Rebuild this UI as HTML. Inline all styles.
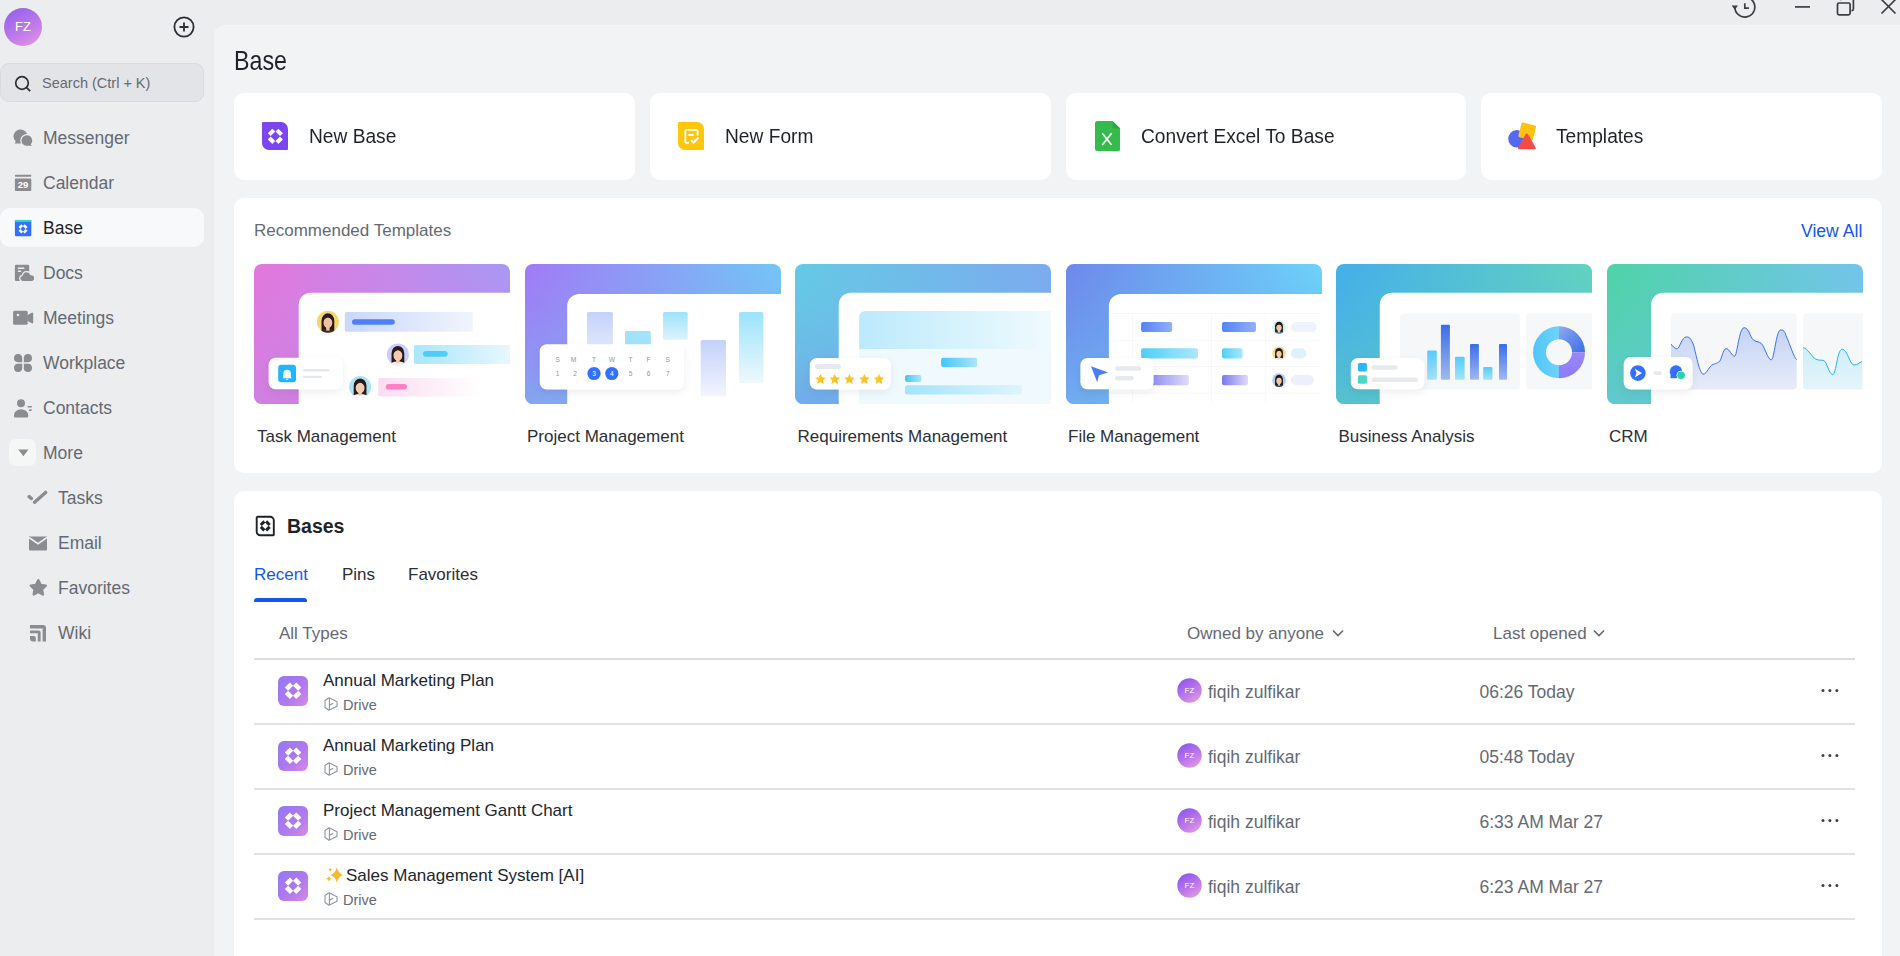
<!DOCTYPE html>
<html><head><meta charset="utf-8">
<style>
*{box-sizing:border-box;margin:0;padding:0}
html,body{width:1900px;height:956px;overflow:hidden;background:#ECEDEF;font-family:"Liberation Sans",sans-serif;color:#1F2329}
.abs{position:absolute}
#side{position:absolute;left:0;top:0;width:214px;height:956px;background:#ECEDEF}
.av{position:absolute;left:4px;top:8px;width:38px;height:38px;border-radius:50%;background:linear-gradient(150deg,#8E5CF0 0%,#C17BE8 60%,#E59BE0 100%);color:#fff;font-size:13px;line-height:38px;text-align:center}
.search{position:absolute;left:0;top:63px;width:204px;height:39px;border-radius:9px;background:#E3E4E7;border:1px solid #DADBDE}
.search span{position:absolute;left:41px;top:10.5px;font-size:14.5px;color:#646A73}
.nav{position:absolute;left:0;width:204px;height:39px}
.nav .t{position:absolute;left:43px;top:10px;font-size:17.5px;color:#646A73;white-space:nowrap}
.nav.act{background:#F8F9FA;border-radius:10px}
.nav.act .t{color:#1F2329}
.nav svg{position:absolute}
#main{position:absolute;left:214px;top:25px;width:1686px;height:931px;background:#F2F3F5;border-top-left-radius:10px}
.title{position:absolute;left:233.8px;top:44.6px;font-size:28px;color:#1F2329;transform:scaleX(.83);transform-origin:0 0}
.card{position:absolute;background:#fff;border-radius:10px}
.ac{top:93px;height:87px}
.ac .t{position:absolute;left:75px;top:31px;font-size:20.5px;color:#1F2329;white-space:nowrap;transform:scaleX(.935);transform-origin:0 0}
.ac svg{position:absolute;left:28px;top:29px}
.tl{font-size:17px;color:#2B2F36;white-space:nowrap;margin-top:.5px}
.tab{top:565px;font-size:17px;color:#2B2F36;white-space:nowrap}
.hd{top:624px;font-size:17px;color:#646A73;white-space:nowrap}
.rt{font-size:17px;color:#22262C;white-space:nowrap;margin-top:1px}
.rd{font-size:14.5px;color:#646A73;white-space:nowrap;margin-top:1px}
.rg{font-size:17.5px;color:#646A73;white-space:nowrap;margin-top:-.5px}
</style></head><body>
<div id="side">
  <div class="av">FZ</div>
  <svg class="abs" style="left:173px;top:16px" width="22" height="22" viewBox="0 0 22 22"><circle cx="11" cy="11" r="9.6" fill="none" stroke="#2B2F36" stroke-width="1.8"/><path d="M11 6.5v9M6.5 11h9" stroke="#2B2F36" stroke-width="1.8"/></svg>
  <div class="search">
    <svg class="abs" style="left:13px;top:11px" width="18" height="18" viewBox="0 0 18 18"><circle cx="8" cy="8" r="6.3" fill="none" stroke="#2B2F36" stroke-width="1.7"/><path d="M12.6 12.6l3.6 3.6" stroke="#2B2F36" stroke-width="1.7"/></svg>
    <span>Search (Ctrl + K)</span>
  </div>

  <div class="nav" style="top:118px"><svg style="left:13px;top:10px" width="21" height="19" viewBox="0 0 21 19"><path d="M7.5 1.4a7 7 0 0 1 0 14H1.6l1.2-1.9A7 7 0 0 1 7.5 1.4z" fill="#8A8C90"/><circle cx="13.8" cy="12.6" r="6.6" fill="#ECEDEF"/><path d="M13.8 7.2a5.4 5.4 0 0 1 3.9 9.1l1.2 1.5h-5.1a5.3 5.3 0 0 1 0-10.6z" fill="#8A8C90"/></svg><span class="t">Messenger</span></div>
  <div class="nav" style="top:163px"><svg style="left:14px;top:11px" width="18" height="18" viewBox="0 0 18 18"><rect x="0.9" y="0.7" width="16.4" height="2" rx=".6" fill="#8A8C90"/><rect x="0.9" y="4.5" width="16.4" height="12.5" rx="1" fill="#8A8C90"/><text x="9.1" y="14.3" font-family="Liberation Sans" font-weight="bold" font-size="9.5" fill="#fff" text-anchor="middle">29</text></svg><span class="t">Calendar</span></div>
  <div class="nav act" style="top:208px"><svg style="left:14px;top:11px" width="18" height="18" viewBox="0 0 18 18"><rect x="0.9" y="0.9" width="16.4" height="16.4" rx="1.2" fill="#3370FF"/><rect x="0.9" y="0.9" width="16.4" height="2" fill="#2ED9C3"/><g fill="#fff" transform="translate(9.1 9.9) scale(0.62)"><rect x="-3.15" y="-2.05" width="6.3" height="4.1" transform="translate(-3.6 -3.7) rotate(-45)"/><rect x="-3.15" y="-2.05" width="6.3" height="4.1" transform="translate(3.4 -3.7) rotate(45)"/><rect x="-3.15" y="-2.05" width="6.3" height="4.1" transform="translate(-3.6 3.8) rotate(45)"/><rect x="-3.15" y="-2.05" width="6.3" height="4.1" transform="translate(3.4 3.8) rotate(-45)"/></g></svg><span class="t">Base</span></div>
  <div class="nav" style="top:253px"><svg style="left:14px;top:11px" width="20" height="18" viewBox="0 0 20 18"><rect x="0.9" y="0.8" width="14.3" height="16.1" rx="1.2" fill="#8A8C90"/><rect x="3.8" y="3.4" width="6.6" height="1.6" rx=".5" fill="#ECEDEF"/><rect x="3.8" y="6.5" width="3.4" height="1.6" rx=".5" fill="#ECEDEF"/><path d="M8.6 17.6a3.2 3.2 0 0 1-.4-6.3a4.6 4.6 0 0 1 8.8-.6a3.4 3.4 0 0 1 .7 6.9z" fill="#8A8C90" stroke="#ECEDEF" stroke-width="1.3"/></svg><span class="t">Docs</span></div>
  <div class="nav" style="top:298px"><svg style="left:13px;top:12px" width="21" height="16" viewBox="0 0 21 16"><rect x="0.1" y="0.7" width="14.6" height="14" rx="1.5" fill="#8A8C90"/><path d="M15.2 5.8l4-2.3v9l-4-2.3z" fill="#8A8C90" stroke="#8A8C90" stroke-width="2" stroke-linejoin="round"/><circle cx="5" cy="5" r="1.3" fill="#ECEDEF"/></svg><span class="t">Meetings</span></div>
  <div class="nav" style="top:343px"><svg style="left:13px;top:10px" width="20" height="20" viewBox="0 0 20 20"><path d="M9.2 9.2H4.8A4.1 4.1 0 1 1 9.2 4.8z" fill="#8A8C90"/><path d="M10.8 9.2h4.4A4.1 4.1 0 1 0 10.8 4.8z" fill="#8A8C90"/><path d="M9.2 10.8H4.8A4.1 4.1 0 1 0 9.2 15.2z" fill="#8A8C90"/><path d="M10.8 10.8h4.4A4.1 4.1 0 1 1 10.8 15.2z" fill="#8A8C90"/></svg><span class="t">Workplace</span></div>
  <div class="nav" style="top:388px"><svg style="left:13px;top:10px" width="21" height="20" viewBox="0 0 21 20"><circle cx="8" cy="5.2" r="4" fill="#8A8C90"/><path d="M1 18.5v-1.5a6 4.8 0 0 1 14.2 0v1.5a.9.9 0 0 1-.9.9H1.9a.9.9 0 0 1-.9-.9z" fill="#8A8C90"/><rect x="14.5" y="8" width="4.5" height="1.6" rx=".8" fill="#8A8C90"/><rect x="15.8" y="11.3" width="3" height="1.6" rx=".8" fill="#8A8C90"/></svg><span class="t">Contacts</span></div>
  <div class="nav" style="top:433px"><div class="abs" style="left:9px;top:6px;width:27px;height:27px;border-radius:7px;background:#F5F6F6"></div><svg style="left:18px;top:16px" width="11" height="8" viewBox="0 0 11 8"><path d="M0.3 0.5h10.2L5.4 7.2z" fill="#8A8C90"/></svg><span class="t">More</span></div>
  <div class="nav" style="top:478px"><svg style="left:27px;top:12px" width="21" height="16" viewBox="0 0 21 16"><path d="M2.2 6.6l2.2 1.9" stroke="#8A8C90" stroke-width="3.4" stroke-linecap="round"/><path d="M7.6 12.2L18.6 2.4" stroke="#8A8C90" stroke-width="3.4" stroke-linecap="round"/></svg><span class="t" style="left:58px">Tasks</span></div>
  <div class="nav" style="top:523px"><svg style="left:28px;top:12px" width="20" height="16" viewBox="0 0 20 16"><path d="M1 1.4h18v13a1 1 0 0 1-1 1H2a1 1 0 0 1-1-1z" fill="#8A8C90"/><path d="M1 2.5l9 6.2 9-6.2" fill="none" stroke="#ECEDEF" stroke-width="1.6"/></svg><span class="t" style="left:58px">Email</span></div>
  <div class="nav" style="top:568px"><svg style="left:29px;top:10px" width="19" height="20" viewBox="0 0 19 20"><path d="M9.3 2.2l2.3 4.7 5.2.7-3.8 3.7.9 5.2-4.6-2.5-4.6 2.5.9-5.2-3.8-3.7 5.2-.7z" fill="#8A8C90" stroke="#8A8C90" stroke-width="2.4" stroke-linejoin="round"/></svg><span class="t" style="left:58px">Favorites</span></div>
  <div class="nav" style="top:613px"><svg style="left:29px;top:10px" width="18" height="20" viewBox="0 0 18 20"><path d="M1 2h13a3 3 0 0 1 3 3v13.6h-3.4V5.4H1z" fill="#8A8C90"/><path d="M1 7.4h8.6a2 2 0 0 1 2 2v9.2H8.8V10.2H1z" fill="#8A8C90"/><path d="M1 13h3.8a2 2 0 0 1 2 2v3.6H4a3 3 0 0 1-3-3z" fill="#8A8C90"/></svg><span class="t" style="left:58px">Wiki</span></div>
</div>
<div id="main"></div>
<div class="title">Base</div>

<svg class="abs" style="left:1728px;top:-4px" width="180" height="26" viewBox="0 0 180 26">
  <g fill="none" stroke="#3A3D42" stroke-width="1.7">
    <path d="M6.8 11A10 10 0 1 0 11.8 2.4"/>
    <path d="M16.8 7.3v4.8h4.1"/>
    <path d="M67 10.9h15"/>
    <rect x="109.5" y="7" width="12.6" height="11.8" rx="1.6"/>
    <path d="M112.8 4.2V3.6a1.6 1.6 0 0 1 1.6-1.6h9.4a1.6 1.6 0 0 1 1.6 1.6v9.4a1.6 1.6 0 0 1-1.6 1.6h-.4"/>
    <path d="M153.5 3.5l14 14M167.5 3.5l-14 14"/>
  </g>
  <path d="M3.6 9.6h6.4l-3.2 4.2z" fill="#3A3D42"/>
</svg>
<div class="card ac" style="left:234px;width:401px"><svg width="26" height="28" viewBox="0 0 26 28"><path d="M1 0H19A7 7 0 0 1 26 7V27A1 1 0 0 1 25 28H7A7 7 0 0 1 0 21V1A1 1 0 0 1 1 0z" fill="#7B46F0"/><g fill="#fff"><rect x="-3.2" y="-2.05" width="6.4" height="4.1" transform="translate(9.5 10.4) rotate(-45)"/><rect x="-3.2" y="-2.05" width="6.4" height="4.1" transform="translate(17.2 10.4) rotate(45)"/><rect x="-3.2" y="-2.05" width="6.4" height="4.1" transform="translate(9.5 18.2) rotate(45)"/><rect x="-3.2" y="-2.05" width="6.4" height="4.1" transform="translate(17.2 18.2) rotate(-45)"/></g></svg><span class="t">New Base</span></div>
<div class="card ac" style="left:650px;width:401px"><svg width="26" height="28" viewBox="0 0 26 28"><path d="M1 0H19A7 7 0 0 1 26 7V27A1 1 0 0 1 25 28H7A7 7 0 0 1 0 21V1A1 1 0 0 1 1 0z" fill="#FFC60A"/><g fill="none" stroke="#fff" stroke-width="1.9"><path d="M19.6 13.4V9.2a1.3 1.3 0 0 0-1.3-1.3H8.6a1.3 1.3 0 0 0-1.3 1.3v10.4a1.3 1.3 0 0 0 1.3 1.3h2.3"/><path d="M10.3 12.9h5.4"/><path d="M13.1 18.2l2.4 2.3 4.8-4.8" stroke-width="2"/></g></svg><span class="t">New Form</span></div>
<div class="card ac" style="left:1066px;width:400px"><svg style="left:28px;top:28px" width="26" height="30" viewBox="0 0 26 30"><path d="M3 0H18L26 7.6V27.5A2.5 2.5 0 0 1 23.5 30H3A2.5 2.5 0 0 1 .5 27.5V2.5A2.5 2.5 0 0 1 3 0z" fill="#35BB4B" transform="translate(0.5 0)"/><path d="M18.5 0L26.5 7.6H20.5a2 2 0 0 1-2-2z" fill="#2DA841"/><path d="M8.2 12.3l9.4 11.8M17.6 12.3l-9.4 11.8" stroke="#fff" stroke-width="1.6"/></svg><span class="t">Convert Excel To Base</span></div>
<div class="card ac" style="left:1481px;width:401px"><svg style="left:25px;top:27px" width="30" height="30" viewBox="0 0 30 30"><circle cx="10.9" cy="18.8" r="8.7" fill="#5468F4"/><path d="M16.6 2.3l11.5 3a1.6 1.6 0 0 1 1.1 2l-3 11.6a1.6 1.6 0 0 1-2 1.1l-11.5-3a1.6 1.6 0 0 1-1.1-2l3-11.6a1.6 1.6 0 0 1 2-1.1z" fill="#FFC20E" transform="translate(.8 .3)"/><path d="M19.5 13.5a1.2 1.2 0 0 1 2.1 0l7.7 13.4a1.2 1.2 0 0 1-1 1.8H12.8a1.2 1.2 0 0 1-1-1.8z" fill="#F54A45" transform="translate(.3 .6)"/></svg><span class="t">Templates</span></div>

<div class="card" style="left:234px;top:198px;width:1648px;height:275px"></div>
<div class="abs" style="left:254px;top:221px;font-size:17px;color:#646A73">Recommended Templates</div>
<div class="abs" style="left:1801px;top:220.5px;font-size:17.6px;color:#1456F0">View All</div>
<svg class="abs" style="left:254px;top:264px" width="256" height="140" viewBox="0 0 256 140">
<defs>
<linearGradient id="g1" x1="0" y1="0" x2="1" y2="0.35"><stop offset="0" stop-color="#E477DC"/><stop offset="1" stop-color="#A19CF8"/></linearGradient>
<linearGradient id="gb1" x1="0" y1="0" x2="0" y2="1"><stop offset="0" stop-color="#E477DC" stop-opacity="0"/><stop offset="1" stop-color="#D07EE0"/></linearGradient>
<clipPath id="cl1"><path d="M8 0H248A8 8 0 0 1 256 8V140H8A8 8 0 0 1 0 132V8A8 8 0 0 1 8 0z"/></clipPath>
<filter id="sh1" x="-30%" y="-40%" width="160%" height="200%"><feDropShadow dx="0" dy="3" stdDeviation="4" flood-color="#1F2329" flood-opacity="0.07"/></filter>
</defs>
<g clip-path="url(#cl1)">
<rect width="256" height="140" fill="url(#g1)"/>
<rect width="256" height="140" fill="url(#gb1)" opacity="0.8"/>
<rect x="44.7" y="28.8" width="260" height="140" rx="12" fill="#fff"/>

<defs>
<linearGradient id="r1a" x1="0" x2="1"><stop offset="0" stop-color="#C8D7FB"/><stop offset="1" stop-color="#F1F4FD"/></linearGradient>
<linearGradient id="r1b" x1="0" x2="1"><stop offset="0" stop-color="#A9E6FB"/><stop offset="1" stop-color="#EAF8FE"/></linearGradient>
<linearGradient id="r1c" x1="0" x2="1"><stop offset="0" stop-color="#FCDCF0"/><stop offset="1" stop-color="#FFFFFF"/></linearGradient>
</defs>
<rect x="90.8" y="48" width="128" height="19.8" rx="2" fill="url(#r1a)"/>
<rect x="98" y="55.3" width="42.8" height="5.5" rx="2.75" fill="#4F7FF5"/>
<rect x="159.9" y="81" width="100" height="19" rx="2" fill="url(#r1b)"/>
<rect x="169" y="87" width="24.6" height="5.7" rx="2.85" fill="#4DCDF7"/>
<rect x="124.2" y="113.9" width="104" height="18.6" rx="2" fill="url(#r1c)"/>
<rect x="131.8" y="120" width="21.2" height="5.6" rx="2.8" fill="#FF7FC4"/>
<g>
<circle cx="73.9" cy="57.8" r="11" fill="#F5D66E"/>
<clipPath id="c1a"><circle cx="73.9" cy="57.8" r="11"/></clipPath>
<g clip-path="url(#c1a)">
<path d="M67.52 66.05V56.70A6.38 7.48 0 0 1 80.28 56.70V66.05z" fill="#2B1A16"/>
<ellipse cx="73.9" cy="69.35" rx="8.58" ry="4.62" fill="#3A2A28"/>
<rect x="72.25" y="62.20" width="3.30" height="4.40" fill="#F0C3A0"/>
<ellipse cx="73.9" cy="58.68" rx="4.40" ry="5.50" fill="#F0C3A0"/>
<path d="M68.95 57.25Q69.50 50.98 73.90 51.20Q78.30 50.98 78.85 57.25Q76.10 53.40 73.90 53.62Q71.70 53.40 68.95 57.25z" fill="#2B1A16"/>
</g></g>
<g>
<circle cx="143.9" cy="90.5" r="11" fill="#C9CFFA"/>
<clipPath id="c1b"><circle cx="143.9" cy="90.5" r="11"/></clipPath>
<g clip-path="url(#c1b)">
<path d="M137.52 98.75V89.40A6.38 7.48 0 0 1 150.28 89.40V98.75z" fill="#2A1C18"/>
<ellipse cx="143.9" cy="102.05" rx="8.58" ry="4.62" fill="#F4F1EE"/>
<rect x="142.25" y="94.90" width="3.30" height="4.40" fill="#F3CDB3"/>
<ellipse cx="143.9" cy="91.38" rx="4.40" ry="5.50" fill="#F3CDB3"/>
<path d="M138.95 89.95Q139.50 83.68 143.90 83.90Q148.30 83.68 148.85 89.95Q146.10 86.10 143.90 86.32Q141.70 86.10 138.95 89.95z" fill="#2A1C18"/>
</g></g>
<g>
<circle cx="106.1" cy="123" r="11" fill="#AEE3F7"/>
<clipPath id="c1c"><circle cx="106.1" cy="123" r="11"/></clipPath>
<g clip-path="url(#c1c)">
<path d="M99.72 131.25V121.90A6.38 7.48 0 0 1 112.48 121.90V131.25z" fill="#2A1C18"/>
<ellipse cx="106.1" cy="134.55" rx="8.58" ry="4.62" fill="#FFFFFF"/>
<rect x="104.45" y="127.40" width="3.30" height="4.40" fill="#F2CBB0"/>
<ellipse cx="106.1" cy="123.88" rx="4.40" ry="5.50" fill="#F2CBB0"/>
<path d="M101.15 122.45Q101.70 116.18 106.10 116.40Q110.50 116.18 111.05 122.45Q108.30 118.60 106.10 118.82Q103.90 118.60 101.15 122.45z" fill="#2A1C18"/>
</g></g>
<g filter="url(#sh1)"><rect x="14.6" y="93.7" width="74" height="31.5" rx="7" fill="#fff"/></g>
<rect x="24.2" y="100.7" width="17.8" height="17.6" rx="3" fill="#1FB6FF"/>
<path d="M29.3 113.3v-3.8a3.8 3.8 0 0 1 7.6 0v3.8l.9.9h-9.4z" fill="#fff"/><rect x="32" y="114.8" width="2.2" height="1.1" rx=".5" fill="#fff"/>
<rect x="49" y="105.1" width="26.7" height="2.4" rx="1.2" fill="#E6E9EC"/>
<rect x="49" y="111.7" width="19.2" height="2.2" rx="1.1" fill="#E6E9EC"/>

</g></svg>
<svg class="abs" style="left:525px;top:264px" width="256" height="140" viewBox="0 0 256 140">
<defs>
<linearGradient id="g2" x1="0" y1="0" x2="1" y2="0.35"><stop offset="0" stop-color="#A17AF6"/><stop offset="1" stop-color="#6CD0F5"/></linearGradient>
<linearGradient id="gb2" x1="0" y1="0" x2="0" y2="1"><stop offset="0" stop-color="#A17AF6" stop-opacity="0"/><stop offset="1" stop-color="#7FAAEE"/></linearGradient>
<clipPath id="cl2"><path d="M8 0H248A8 8 0 0 1 256 8V140H8A8 8 0 0 1 0 132V8A8 8 0 0 1 8 0z"/></clipPath>
<filter id="sh2" x="-30%" y="-40%" width="160%" height="200%"><feDropShadow dx="0" dy="3" stdDeviation="4" flood-color="#1F2329" flood-opacity="0.07"/></filter>
</defs>
<g clip-path="url(#cl2)">
<rect width="256" height="140" fill="url(#g2)"/>
<rect width="256" height="140" fill="url(#gb2)" opacity="0.8"/><g transform="translate(-1 0)">
<rect x="43.2" y="30" width="260" height="140" rx="12" fill="#fff"/>

<defs>
<linearGradient id="p2a" x1="0" y1="0" x2="0" y2="1"><stop offset="0" stop-color="#C3D2FA"/><stop offset="1" stop-color="#E4EBFC"/></linearGradient>
<linearGradient id="p2b" x1="0" y1="0" x2="0" y2="1"><stop offset="0" stop-color="#9DE3FB"/><stop offset="1" stop-color="#DCF3FB"/></linearGradient>
<linearGradient id="p2c" x1="0" y1="0" x2="0" y2="1"><stop offset="0" stop-color="#C3D1FA"/><stop offset="1" stop-color="#F2F5FE"/></linearGradient>
<linearGradient id="p2d" x1="0" y1="0" x2="0" y2="1"><stop offset="0" stop-color="#9BE3FB"/><stop offset="1" stop-color="#EEF9FD"/></linearGradient>
</defs>
<rect x="63" y="48" width="25.9" height="40" rx="1.5" fill="url(#p2a)"/>
<rect x="101" y="67" width="25.8" height="20" rx="1.5" fill="#A1E3FB"/>
<rect x="139" y="48" width="24.7" height="27.8" rx="1.5" fill="url(#p2b)"/>
<rect x="176.7" y="76.1" width="25.3" height="56.4" rx="1.5" fill="url(#p2c)"/>
<rect x="214.9" y="48" width="24.5" height="70.9" rx="1.5" fill="url(#p2d)"/>
<g filter="url(#sh2)"><rect x="15.8" y="80.2" width="144.1" height="45.4" rx="7" fill="#fff"/></g>
<g font-family="Liberation Sans" font-size="6.6" fill="#8F959E" text-anchor="middle">
<text x="33.7" y="97.5">S</text><text x="49.5" y="97.5">M</text><text x="70" y="97.5">T</text><text x="87.8" y="97.5">W</text><text x="106.6" y="97.5">T</text><text x="124.5" y="97.5">F</text><text x="143.8" y="97.5">S</text>
<circle cx="70" cy="109.5" r="6.6" fill="#3370FF"/><circle cx="87.8" cy="109.5" r="6.6" fill="#3370FF"/>
<text x="33.7" y="111.6">1</text><text x="51" y="111.6">2</text><text x="70" y="111.6" fill="#fff">3</text><text x="87.8" y="111.6" fill="#fff">4</text><text x="106.6" y="111.6">5</text><text x="124.5" y="111.6">6</text><text x="143.8" y="111.6">7</text>
</g>

</g></g></svg>
<svg class="abs" style="left:795px;top:264px" width="256" height="140" viewBox="0 0 256 140">
<defs>
<linearGradient id="g3" x1="0" y1="0" x2="1" y2="0.35"><stop offset="0" stop-color="#64CAE4"/><stop offset="1" stop-color="#80A6F0"/></linearGradient>
<linearGradient id="gb3" x1="0" y1="0" x2="0" y2="1"><stop offset="0" stop-color="#64CAE4" stop-opacity="0"/><stop offset="1" stop-color="#72A6EC"/></linearGradient>
<clipPath id="cl3"><path d="M8 0H248A8 8 0 0 1 256 8V140H8A8 8 0 0 1 0 132V8A8 8 0 0 1 8 0z"/></clipPath>
<filter id="sh3" x="-30%" y="-40%" width="160%" height="200%"><feDropShadow dx="0" dy="3" stdDeviation="4" flood-color="#1F2329" flood-opacity="0.07"/></filter>
</defs>
<g clip-path="url(#cl3)">
<rect width="256" height="140" fill="url(#g3)"/>
<rect width="256" height="140" fill="url(#gb3)" opacity="0.8"/><g transform="translate(-1 0)">
<rect x="44.7" y="28.8" width="260" height="140" rx="12" fill="#fff"/>

<defs>
<linearGradient id="q3a" x1="0" x2="1"><stop offset="0" stop-color="#BBEAFC"/><stop offset="1" stop-color="#EFFAFE"/></linearGradient>
<linearGradient id="q3b" x1="0" x2="1"><stop offset="0" stop-color="#45C7F6"/><stop offset="1" stop-color="#A9E6FB"/></linearGradient>
<linearGradient id="q3c" x1="0" x2="1"><stop offset="0" stop-color="#A2E4FB"/><stop offset="1" stop-color="#DEF4FC"/></linearGradient>
<linearGradient id="star" x1="0" y1="0" x2="1" y2="1"><stop offset="0" stop-color="#FFD43B"/><stop offset="1" stop-color="#F5B50F"/></linearGradient>
</defs>
<rect x="65.2" y="47.1" width="200" height="100" rx="6" fill="#F0F9FD"/>
<path d="M71.2 47.1H256V84.9H65.2V53.1A6 6 0 0 1 71.2 47.1z" fill="url(#q3a)"/>
<rect x="147.1" y="93.7" width="35.9" height="9.2" rx="2" fill="url(#q3b)"/>
<rect x="111" y="111" width="16.4" height="6.9" rx="2" fill="url(#q3b)"/>
<rect x="111" y="121.2" width="116.7" height="9.4" rx="2" fill="url(#q3c)"/>
<g filter="url(#sh3)"><rect x="15.8" y="94.1" width="81.1" height="31.4" rx="7" fill="#fff"/></g>
<rect x="21" y="100" width="25.9" height="5" rx="2.5" fill="#E6EAEE"/>
<g fill="url(#star)">
<path id="st" d="M0 -5.4L1.6 -1.9 5.3 -1.5 2.5 1 3.3 4.7 0 2.8 -3.3 4.7 -2.5 1 -5.3 -1.5 -1.6 -1.9z" transform="translate(26.4 115.2)"/>
<path d="M0 -5.4L1.6 -1.9 5.3 -1.5 2.5 1 3.3 4.7 0 2.8 -3.3 4.7 -2.5 1 -5.3 -1.5 -1.6 -1.9z" transform="translate(40.7 115.2)"/>
<path d="M0 -5.4L1.6 -1.9 5.3 -1.5 2.5 1 3.3 4.7 0 2.8 -3.3 4.7 -2.5 1 -5.3 -1.5 -1.6 -1.9z" transform="translate(55.3 115.2)"/>
<path d="M0 -5.4L1.6 -1.9 5.3 -1.5 2.5 1 3.3 4.7 0 2.8 -3.3 4.7 -2.5 1 -5.3 -1.5 -1.6 -1.9z" transform="translate(70.3 115.2)"/>
<path d="M0 -5.4L1.6 -1.9 5.3 -1.5 2.5 1 3.3 4.7 0 2.8 -3.3 4.7 -2.5 1 -5.3 -1.5 -1.6 -1.9z" transform="translate(84.9 115.2)"/>
</g>

</g></g></svg>
<svg class="abs" style="left:1066px;top:264px" width="256" height="140" viewBox="0 0 256 140">
<defs>
<linearGradient id="g4" x1="0" y1="0" x2="1" y2="0.35"><stop offset="0" stop-color="#6E88EB"/><stop offset="1" stop-color="#6CDCFB"/></linearGradient>
<linearGradient id="gb4" x1="0" y1="0" x2="0" y2="1"><stop offset="0" stop-color="#6E88EB" stop-opacity="0"/><stop offset="1" stop-color="#6FB0EE"/></linearGradient>
<clipPath id="cl4"><path d="M8 0H248A8 8 0 0 1 256 8V140H8A8 8 0 0 1 0 132V8A8 8 0 0 1 8 0z"/></clipPath>
<filter id="sh4" x="-30%" y="-40%" width="160%" height="200%"><feDropShadow dx="0" dy="3" stdDeviation="4" flood-color="#1F2329" flood-opacity="0.07"/></filter>
</defs>
<g clip-path="url(#cl4)">
<rect width="256" height="140" fill="url(#g4)"/>
<rect width="256" height="140" fill="url(#gb4)" opacity="0.8"/><g transform="translate(-1 0)">
<rect x="43.9" y="30" width="260" height="140" rx="12" fill="#fff"/>

<defs>
<linearGradient id="f4a" x1="0" x2="1"><stop offset="0" stop-color="#5383F7"/><stop offset="1" stop-color="#92B0FB"/></linearGradient>
<linearGradient id="f4b" x1="0" x2="1"><stop offset="0" stop-color="#4ECFF7"/><stop offset="1" stop-color="#AAE8FB"/></linearGradient>
<linearGradient id="f4c" x1="0" x2="1"><stop offset="0" stop-color="#7A78EF"/><stop offset="1" stop-color="#DFDCFB"/></linearGradient>
</defs>
<g stroke="#EFF1F3" stroke-width="0.6">
<path d="M43.9 49.5H256M43.9 76.4H256M43.9 102.5H256M43.9 129.1H256M67.6 49.5V140M146.4 49.5V140M200.3 49.5V140"/>
</g>
<rect x="76.1" y="58" width="31.1" height="10" rx="2" fill="url(#f4a)"/>
<rect x="157" y="58" width="34" height="10" rx="2" fill="url(#f4a)"/>
<rect x="226" y="58" width="25.8" height="10" rx="5" fill="#EEF3FD"/>
<rect x="76.1" y="84.2" width="56.9" height="10.3" rx="2" fill="url(#f4b)"/>
<rect x="157" y="84.2" width="20.6" height="10.3" rx="2" fill="url(#f4b)"/>
<rect x="226" y="84.2" width="15.3" height="10.3" rx="5" fill="#DDF3FC"/>
<rect x="76.1" y="111" width="47.8" height="10.3" rx="2" fill="url(#f4c)"/>
<rect x="157" y="111" width="26" height="10.3" rx="2" fill="url(#f4c)"/>
<rect x="226" y="111" width="23" height="10.3" rx="5" fill="#EFEFFC"/>
<g>
<circle cx="214" cy="63" r="6.8" fill="#D5F3EE"/>
<clipPath id="c4a"><circle cx="214" cy="63" r="6.8"/></clipPath>
<g clip-path="url(#c4a)">
<path d="M210.06 68.10V62.32A3.94 4.62 0 0 1 217.94 62.32V68.10z" fill="#1E1A18"/>
<ellipse cx="214" cy="70.14" rx="5.30" ry="2.86" fill="#3F6FD0"/>
<rect x="212.98" y="65.72" width="2.04" height="2.72" fill="#F0C8A8"/>
<ellipse cx="214" cy="63.54" rx="2.72" ry="3.40" fill="#F0C8A8"/>
<path d="M210.94 62.66Q211.28 58.78 214.00 58.92Q216.72 58.78 217.06 62.66Q215.36 60.28 214.00 60.42Q212.64 60.28 210.94 62.66z" fill="#1E1A18"/>
</g></g>
<g>
<circle cx="214" cy="89.3" r="6.8" fill="#F6DC8E"/>
<clipPath id="c4b"><circle cx="214" cy="89.3" r="6.8"/></clipPath>
<g clip-path="url(#c4b)">
<path d="M210.06 94.40V88.62A3.94 4.62 0 0 1 217.94 88.62V94.40z" fill="#1E1A18"/>
<ellipse cx="214" cy="96.44" rx="5.30" ry="2.86" fill="#F3EEE8"/>
<rect x="212.98" y="92.02" width="2.04" height="2.72" fill="#F2CBAE"/>
<ellipse cx="214" cy="89.84" rx="2.72" ry="3.40" fill="#F2CBAE"/>
<path d="M210.94 88.96Q211.28 85.08 214.00 85.22Q216.72 85.08 217.06 88.96Q215.36 86.58 214.00 86.72Q212.64 86.58 210.94 88.96z" fill="#1E1A18"/>
</g></g>
<g>
<circle cx="214" cy="116.1" r="6.8" fill="#B9C6F7"/>
<clipPath id="c4c"><circle cx="214" cy="116.1" r="6.8"/></clipPath>
<g clip-path="url(#c4c)">
<path d="M210.06 121.20V115.42A3.94 4.62 0 0 1 217.94 115.42V121.20z" fill="#1E1A18"/>
<ellipse cx="214" cy="123.24" rx="5.30" ry="2.86" fill="#2E3C70"/>
<rect x="212.98" y="118.82" width="2.04" height="2.72" fill="#F0C8A8"/>
<ellipse cx="214" cy="116.64" rx="2.72" ry="3.40" fill="#F0C8A8"/>
<path d="M210.94 115.76Q211.28 111.88 214.00 112.02Q216.72 111.88 217.06 115.76Q215.36 113.38 214.00 113.52Q212.64 113.38 210.94 115.76z" fill="#1E1A18"/>
</g></g>
<g filter="url(#sh4)"><rect x="15.4" y="94.1" width="73.2" height="31.1" rx="7" fill="#fff"/></g>
<path d="M26 102.2L43.2 108.6 34 111.3 32.2 118.3z" fill="#4D7CF7"/>
<rect x="50" y="102.2" width="26.1" height="4.6" rx="2.3" fill="#E6EAEE"/>
<rect x="50" y="112" width="18.8" height="4.6" rx="2.3" fill="#E6EAEE"/>

</g></g></svg>
<svg class="abs" style="left:1336px;top:264px" width="256" height="140" viewBox="0 0 256 140">
<defs>
<linearGradient id="g5" x1="0" y1="0" x2="1" y2="0.35"><stop offset="0" stop-color="#44AEEA"/><stop offset="1" stop-color="#66D7BA"/></linearGradient>
<linearGradient id="gb5" x1="0" y1="0" x2="0" y2="1"><stop offset="0" stop-color="#44AEEA" stop-opacity="0"/><stop offset="1" stop-color="#58C3C9"/></linearGradient>
<clipPath id="cl5"><path d="M8 0H248A8 8 0 0 1 256 8V140H8A8 8 0 0 1 0 132V8A8 8 0 0 1 8 0z"/></clipPath>
<filter id="sh5" x="-30%" y="-40%" width="160%" height="200%"><feDropShadow dx="0" dy="3" stdDeviation="4" flood-color="#1F2329" flood-opacity="0.07"/></filter>
</defs>
<g clip-path="url(#cl5)">
<rect width="256" height="140" fill="url(#g5)"/>
<rect width="256" height="140" fill="url(#gb5)" opacity="0.8"/><g transform="translate(-1 0)">
<rect x="44.7" y="28.8" width="260" height="140" rx="12" fill="#fff"/>

<defs>
<linearGradient id="b5a" x1="0" y1="0" x2="0" y2="1"><stop offset="0" stop-color="#56CBF9"/><stop offset="1" stop-color="#A3E2F9"/></linearGradient>
<linearGradient id="b5b" x1="0" y1="0" x2="0" y2="1"><stop offset="0" stop-color="#3A6DE6"/><stop offset="1" stop-color="#A1B9F0"/></linearGradient>
<linearGradient id="b5c" x1="0" y1="0" x2="1" y2="1"><stop offset="0" stop-color="#8FAAF0"/><stop offset="1" stop-color="#3B6DE5"/></linearGradient>
<linearGradient id="b5d" x1="0" y1="0" x2="0" y2="1"><stop offset="0" stop-color="#9C86F8"/><stop offset="1" stop-color="#8A7CF8"/></linearGradient>
<linearGradient id="b5e" x1="0" y1="0" x2="1" y2="0"><stop offset="0" stop-color="#4FC6F7"/><stop offset="1" stop-color="#6FD3F9"/></linearGradient>
</defs>
<rect x="65.2" y="49.5" width="120" height="76" rx="4" fill="#F5F7F9"/>
<rect x="191" y="49.5" width="80" height="76" rx="4" fill="#F5F7F9"/>
<rect x="92.2" y="86.4" width="9.6" height="29.3" rx="1" fill="url(#b5a)"/>
<rect x="105.9" y="60.8" width="9" height="54.9" rx="1" fill="url(#b5b)"/>
<rect x="120" y="92.7" width="9.6" height="23" rx="1" fill="url(#b5a)"/>
<rect x="135" y="80.1" width="8.9" height="35.6" rx="1" fill="url(#b5b)"/>
<rect x="148.2" y="102.9" width="9.2" height="12.8" rx="1" fill="url(#b5a)"/>
<rect x="164" y="80.1" width="8" height="35.6" rx="1" fill="url(#b5b)"/>
<path d="M224 62.3A26 26 0 0 1 250 88.3H237A13 13 0 0 0 224 75.3z" fill="url(#b5c)"/>
<path d="M250 88.3A26 26 0 0 1 224 114.3V101.3A13 13 0 0 0 237 88.3z" fill="url(#b5d)"/>
<path d="M224 114.3A26 26 0 0 1 224 62.3V75.3A13 13 0 0 0 224 101.3z" fill="url(#b5e)"/>
<g filter="url(#sh5)"><rect x="15.8" y="94.1" width="73.5" height="31.1" rx="7" fill="#fff"/></g>
<rect x="23" y="99.1" width="8.9" height="8.5" rx="1.5" fill="#2BB5FA"/>
<rect x="23" y="111.3" width="8.9" height="8.5" rx="1.5" fill="#4DD6C7"/>
<rect x="36.3" y="101.2" width="26.4" height="4.5" rx="2.25" fill="#E6EAEE"/>
<rect x="36.3" y="113.4" width="46.7" height="4.5" rx="2.25" fill="#E6EAEE"/>

</g></g></svg>
<svg class="abs" style="left:1607px;top:264px" width="256" height="140" viewBox="0 0 256 140">
<defs>
<linearGradient id="g6" x1="0" y1="0" x2="1" y2="0.35"><stop offset="0" stop-color="#4ED3A7"/><stop offset="1" stop-color="#79C2F4"/></linearGradient>
<linearGradient id="gb6" x1="0" y1="0" x2="0" y2="1"><stop offset="0" stop-color="#4ED3A7" stop-opacity="0"/><stop offset="1" stop-color="#62C6D4"/></linearGradient>
<clipPath id="cl6"><path d="M8 0H248A8 8 0 0 1 256 8V140H8A8 8 0 0 1 0 132V8A8 8 0 0 1 8 0z"/></clipPath>
<filter id="sh6" x="-30%" y="-40%" width="160%" height="200%"><feDropShadow dx="0" dy="3" stdDeviation="4" flood-color="#1F2329" flood-opacity="0.07"/></filter>
</defs>
<g clip-path="url(#cl6)">
<rect width="256" height="140" fill="url(#g6)"/>
<rect width="256" height="140" fill="url(#gb6)" opacity="0.8"/><g transform="translate(-2 0)">
<rect x="46.1" y="28.8" width="260" height="140" rx="12" fill="#fff"/>

<defs>
<linearGradient id="c6a" x1="0" y1="0" x2="0" y2="1"><stop offset="0" stop-color="#C3D3F6"/><stop offset="1" stop-color="#E8ECF8"/></linearGradient>
<linearGradient id="c6b" x1="0" y1="0" x2="0" y2="1"><stop offset="0" stop-color="#CDEEFA"/><stop offset="1" stop-color="#E6F5FB"/></linearGradient>
<clipPath id="c6c"><rect x="65.9" y="49.5" width="125.9" height="76" rx="4"/></clipPath>
<clipPath id="c6d"><rect x="198" y="49.5" width="80" height="76" rx="4"/></clipPath>
</defs>
<rect x="65.9" y="49.5" width="125.9" height="76" rx="4" fill="#F6F7F9"/>
<rect x="198" y="49.5" width="80" height="76" rx="4" fill="#F6F7F9"/>
<g clip-path="url(#c6c)">
<path d="M65.9 79.8C68 83 70.5 85 72.5 84.6S77 72.9 81.3 72.9S86 76 87.8 79S94 110 98.1 110.1S104 101.5 108.3 100.3S112 99 114.2 97.8S118 84.6 121.2 84.6S127 92.5 129.6 92.2S134 63.7 139.1 63.7S145 73.5 148.6 76.1S154 77 156.7 79.8S163 95.9 166.2 95.9S171 65.9 175.7 65.9S180 70 182.3 74.7S189 94 191.8 95.9V126H65.9z" fill="url(#c6a)"/>
<path d="M65.9 79.8C68 83 70.5 85 72.5 84.6S77 72.9 81.3 72.9S86 76 87.8 79S94 110 98.1 110.1S104 101.5 108.3 100.3S112 99 114.2 97.8S118 84.6 121.2 84.6S127 92.5 129.6 92.2S134 63.7 139.1 63.7S145 73.5 148.6 76.1S154 77 156.7 79.8S163 95.9 166.2 95.9S171 65.9 175.7 65.9S180 70 182.3 74.7S189 94 191.8 95.9" fill="none" stroke="#3D6FEB" stroke-width="1"/>
</g>
<g clip-path="url(#c6d)">
<path d="M198 83.7C203 84 207 93.5 210.8 95.2S216 95.5 218.9 96.6S224 110.5 227.7 110.5S232 85.2 237.2 85.2S245 101 248.9 101S254 99 257 97.4V126H198z" fill="url(#c6b)"/>
<path d="M198 83.7C203 84 207 93.5 210.8 95.2S216 95.5 218.9 96.6S224 110.5 227.7 110.5S232 85.2 237.2 85.2S245 101 248.9 101S254 99 257 97.4" fill="none" stroke="#1FB4F5" stroke-width="1"/>
</g>
<g filter="url(#sh6)"><rect x="18.7" y="93" width="68.9" height="32.5" rx="7" fill="#fff"/></g>
<circle cx="32.9" cy="109.1" r="7.8" fill="#3370FF"/>
<path d="M29.8 104.8L37 109.1 29.8 113.4 31.6 109.1z" fill="#fff"/>
<rect x="48.3" y="107.3" width="8.5" height="3.6" rx="1.8" fill="#E6EAEE"/>
<circle cx="71" cy="107.6" r="6.3" fill="#3370FF"/>
<rect x="65.5" y="111" width="6" height="3.2" fill="#3370FF"/>
<circle cx="76.1" cy="111.3" r="4.5" fill="#fff"/>
<circle cx="76.1" cy="111.3" r="3.8" fill="#22D3AE"/>

</g></g></svg><div class="abs tl" style="left:257px;top:426px">Task Management</div><div class="abs tl" style="left:527px;top:426px">Project Management</div><div class="abs tl" style="left:797.5px;top:426px">Requirements Management</div><div class="abs tl" style="left:1068px;top:426px">File Management</div><div class="abs tl" style="left:1338.5px;top:426px">Business Analysis</div><div class="abs tl" style="left:1609px;top:426px">CRM</div>
<div class="card" style="left:234px;top:491px;width:1648px;height:480px"></div>
<svg class="abs" style="left:255px;top:515px" width="21" height="22" viewBox="0 0 21 22"><path d="M2.6 1.8H15.2A3.6 3.6 0 0 1 18.8 5.4V19.4A.9.9 0 0 1 17.9 20.3H5.3A3.6 3.6 0 0 1 1.7 16.7V2.7A.9.9 0 0 1 2.6 1.8z" fill="none" stroke="#1F2329" stroke-width="1.9"/><g fill="#1F2329"><rect x="-2.5" y="-1.5" width="5" height="3" transform="translate(7.6 8.2) rotate(-45)"/><rect x="-2.5" y="-1.5" width="5" height="3" transform="translate(12.9 8.2) rotate(45)"/><rect x="-2.5" y="-1.5" width="5" height="3" transform="translate(7.6 13.6) rotate(45)"/><rect x="-2.5" y="-1.5" width="5" height="3" transform="translate(12.9 13.6) rotate(-45)"/></g></svg>
<div class="abs" style="left:287px;top:515px;font-size:19.5px;font-weight:bold;color:#1F2329">Bases</div>
<div class="abs tab" style="left:254px;color:#1456F0">Recent</div><div class="abs" style="left:254px;top:598px;width:53px;height:4px;border-radius:3px 3px 0 0;background:#1456F0"></div>
<div class="abs tab" style="left:342px">Pins</div><div class="abs tab" style="left:408px">Favorites</div>
<div class="abs hd" style="left:279px">All Types</div>
<div class="abs hd" style="left:1187px">Owned by anyone</div><svg class="abs" style="left:1331px;top:627px" width="14" height="12" viewBox="0 0 14 12"><path d="M2 3.5l5 5 5-5" fill="none" stroke="#646A73" stroke-width="1.6"/></svg>
<div class="abs hd" style="left:1493px">Last opened</div><svg class="abs" style="left:1592px;top:627px" width="14" height="12" viewBox="0 0 14 12"><path d="M2 3.5l5 5 5-5" fill="none" stroke="#646A73" stroke-width="1.6"/></svg>
<div class="abs" style="left:254px;top:658px;width:1601px;height:2px;background:#DCDDE0"></div>
<svg class="abs" style="left:278px;top:676px" width="30" height="30" viewBox="0 0 30 30"><defs><linearGradient id="bi0" x1="0" y1="0" x2="1" y2="1"><stop offset="0" stop-color="#9378F4"/><stop offset="0.55" stop-color="#B078EE"/><stop offset="1" stop-color="#D58BE6"/></linearGradient></defs><rect width="30" height="30" rx="6" fill="url(#bi0)"/><g fill="#fff"><rect x="-3.6" y="-2.3" width="7.2" height="4.6" transform="translate(11 10.6) rotate(-45)"/><rect x="-3.6" y="-2.3" width="7.2" height="4.6" transform="translate(19.2 10.6) rotate(45)"/><rect x="-3.6" y="-2.3" width="7.2" height="4.6" transform="translate(11 18.8) rotate(45)"/><rect x="-3.6" y="-2.3" width="7.2" height="4.6" transform="translate(19.2 18.8) rotate(-45)"/></g></svg>
<div class="abs rt" style="left:323px;top:670px">Annual Marketing Plan</div>
<svg class="abs" style="left:323.5px;top:696.5px" width="14" height="14" viewBox="0 0 14 14"><path d="M1 3.5L5 .8L13 4.8V9.2L5 13.2L1 10.5z" fill="none" stroke="#8F959E" stroke-width="1.1" stroke-linejoin="round"/><path d="M5.4 1V13M5.4 8.3L9.2 6.2" stroke="#8F959E" stroke-width="1.1"/></svg>
<div class="abs rd" style="left:343px;top:696px">Drive</div>
<svg class="abs" style="left:1176.5px;top:677.5px" width="25" height="25" viewBox="0 0 25 25"><defs><linearGradient id="oa0" x1="0.2" y1="0" x2="0.8" y2="1"><stop offset="0" stop-color="#8C55EE"/><stop offset="0.6" stop-color="#BF79E8"/><stop offset="1" stop-color="#E39DE2"/></linearGradient></defs><circle cx="12.5" cy="12.5" r="12.2" fill="url(#oa0)"/><text x="12.5" y="15.3" text-anchor="middle" font-family="Liberation Sans" font-size="8" fill="#fff">FZ</text></svg>
<div class="abs rg" style="left:1208px;top:682px">fiqih zulfikar</div>
<div class="abs rg" style="left:1479.5px;top:682px">06:26 Today</div>
<svg class="abs" style="left:1818px;top:687px" width="24" height="8" viewBox="0 0 24 8"><circle cx="5" cy="3.6" r="1.5" fill="#3C4048"/><circle cx="11.9" cy="3.6" r="1.5" fill="#3C4048"/><circle cx="18.9" cy="3.6" r="1.5" fill="#3C4048"/></svg>
<div class="abs" style="left:254px;top:723px;width:1601px;height:2px;background:#E1E2E4"></div>
<svg class="abs" style="left:278px;top:741px" width="30" height="30" viewBox="0 0 30 30"><defs><linearGradient id="bi1" x1="0" y1="0" x2="1" y2="1"><stop offset="0" stop-color="#9378F4"/><stop offset="0.55" stop-color="#B078EE"/><stop offset="1" stop-color="#D58BE6"/></linearGradient></defs><rect width="30" height="30" rx="6" fill="url(#bi1)"/><g fill="#fff"><rect x="-3.6" y="-2.3" width="7.2" height="4.6" transform="translate(11 10.6) rotate(-45)"/><rect x="-3.6" y="-2.3" width="7.2" height="4.6" transform="translate(19.2 10.6) rotate(45)"/><rect x="-3.6" y="-2.3" width="7.2" height="4.6" transform="translate(11 18.8) rotate(45)"/><rect x="-3.6" y="-2.3" width="7.2" height="4.6" transform="translate(19.2 18.8) rotate(-45)"/></g></svg>
<div class="abs rt" style="left:323px;top:735px">Annual Marketing Plan</div>
<svg class="abs" style="left:323.5px;top:761.5px" width="14" height="14" viewBox="0 0 14 14"><path d="M1 3.5L5 .8L13 4.8V9.2L5 13.2L1 10.5z" fill="none" stroke="#8F959E" stroke-width="1.1" stroke-linejoin="round"/><path d="M5.4 1V13M5.4 8.3L9.2 6.2" stroke="#8F959E" stroke-width="1.1"/></svg>
<div class="abs rd" style="left:343px;top:761px">Drive</div>
<svg class="abs" style="left:1176.5px;top:742.5px" width="25" height="25" viewBox="0 0 25 25"><defs><linearGradient id="oa1" x1="0.2" y1="0" x2="0.8" y2="1"><stop offset="0" stop-color="#8C55EE"/><stop offset="0.6" stop-color="#BF79E8"/><stop offset="1" stop-color="#E39DE2"/></linearGradient></defs><circle cx="12.5" cy="12.5" r="12.2" fill="url(#oa1)"/><text x="12.5" y="15.3" text-anchor="middle" font-family="Liberation Sans" font-size="8" fill="#fff">FZ</text></svg>
<div class="abs rg" style="left:1208px;top:747px">fiqih zulfikar</div>
<div class="abs rg" style="left:1479.5px;top:747px">05:48 Today</div>
<svg class="abs" style="left:1818px;top:752px" width="24" height="8" viewBox="0 0 24 8"><circle cx="5" cy="3.6" r="1.5" fill="#3C4048"/><circle cx="11.9" cy="3.6" r="1.5" fill="#3C4048"/><circle cx="18.9" cy="3.6" r="1.5" fill="#3C4048"/></svg>
<div class="abs" style="left:254px;top:788px;width:1601px;height:2px;background:#E1E2E4"></div>
<svg class="abs" style="left:278px;top:806px" width="30" height="30" viewBox="0 0 30 30"><defs><linearGradient id="bi2" x1="0" y1="0" x2="1" y2="1"><stop offset="0" stop-color="#9378F4"/><stop offset="0.55" stop-color="#B078EE"/><stop offset="1" stop-color="#D58BE6"/></linearGradient></defs><rect width="30" height="30" rx="6" fill="url(#bi2)"/><g fill="#fff"><rect x="-3.6" y="-2.3" width="7.2" height="4.6" transform="translate(11 10.6) rotate(-45)"/><rect x="-3.6" y="-2.3" width="7.2" height="4.6" transform="translate(19.2 10.6) rotate(45)"/><rect x="-3.6" y="-2.3" width="7.2" height="4.6" transform="translate(11 18.8) rotate(45)"/><rect x="-3.6" y="-2.3" width="7.2" height="4.6" transform="translate(19.2 18.8) rotate(-45)"/></g></svg>
<div class="abs rt" style="left:323px;top:800px">Project Management Gantt Chart</div>
<svg class="abs" style="left:323.5px;top:826.5px" width="14" height="14" viewBox="0 0 14 14"><path d="M1 3.5L5 .8L13 4.8V9.2L5 13.2L1 10.5z" fill="none" stroke="#8F959E" stroke-width="1.1" stroke-linejoin="round"/><path d="M5.4 1V13M5.4 8.3L9.2 6.2" stroke="#8F959E" stroke-width="1.1"/></svg>
<div class="abs rd" style="left:343px;top:826px">Drive</div>
<svg class="abs" style="left:1176.5px;top:807.5px" width="25" height="25" viewBox="0 0 25 25"><defs><linearGradient id="oa2" x1="0.2" y1="0" x2="0.8" y2="1"><stop offset="0" stop-color="#8C55EE"/><stop offset="0.6" stop-color="#BF79E8"/><stop offset="1" stop-color="#E39DE2"/></linearGradient></defs><circle cx="12.5" cy="12.5" r="12.2" fill="url(#oa2)"/><text x="12.5" y="15.3" text-anchor="middle" font-family="Liberation Sans" font-size="8" fill="#fff">FZ</text></svg>
<div class="abs rg" style="left:1208px;top:812px">fiqih zulfikar</div>
<div class="abs rg" style="left:1479.5px;top:812px">6:33 AM Mar 27</div>
<svg class="abs" style="left:1818px;top:817px" width="24" height="8" viewBox="0 0 24 8"><circle cx="5" cy="3.6" r="1.5" fill="#3C4048"/><circle cx="11.9" cy="3.6" r="1.5" fill="#3C4048"/><circle cx="18.9" cy="3.6" r="1.5" fill="#3C4048"/></svg>
<div class="abs" style="left:254px;top:853px;width:1601px;height:2px;background:#E1E2E4"></div>
<svg class="abs" style="left:278px;top:871px" width="30" height="30" viewBox="0 0 30 30"><defs><linearGradient id="bi3" x1="0" y1="0" x2="1" y2="1"><stop offset="0" stop-color="#9378F4"/><stop offset="0.55" stop-color="#B078EE"/><stop offset="1" stop-color="#D58BE6"/></linearGradient></defs><rect width="30" height="30" rx="6" fill="url(#bi3)"/><g fill="#fff"><rect x="-3.6" y="-2.3" width="7.2" height="4.6" transform="translate(11 10.6) rotate(-45)"/><rect x="-3.6" y="-2.3" width="7.2" height="4.6" transform="translate(19.2 10.6) rotate(45)"/><rect x="-3.6" y="-2.3" width="7.2" height="4.6" transform="translate(11 18.8) rotate(45)"/><rect x="-3.6" y="-2.3" width="7.2" height="4.6" transform="translate(19.2 18.8) rotate(-45)"/></g></svg>
<svg class="abs" style="left:323px;top:861px" width="22" height="22" viewBox="0 0 22 22"><path d="M13.8 6.35Q15.3 12.6 20.1 14.1Q15.3 15.6 13.8 21.85Q12.3 15.6 7.5 14.1Q12.3 12.6 13.8 6.35z" fill="#F5BD2E"/><path d="M7.2 6.8Q7.7 8.2 9.1 8.7Q7.7 9.2 7.2 10.6Q6.7 9.2 5.3 8.7Q6.7 8.2 7.2 6.8z" fill="#F5BD2E"/><path d="M5.9 15.2Q6.6 17.1 8.5 17.8Q6.6 18.5 5.9 20.4Q5.2 18.5 3.3 17.8Q5.2 17.1 5.9 15.2z" fill="#F5BD2E"/></svg>
<div class="abs rt" style="left:346px;top:865px">Sales Management System [AI]</div>
<svg class="abs" style="left:323.5px;top:891.5px" width="14" height="14" viewBox="0 0 14 14"><path d="M1 3.5L5 .8L13 4.8V9.2L5 13.2L1 10.5z" fill="none" stroke="#8F959E" stroke-width="1.1" stroke-linejoin="round"/><path d="M5.4 1V13M5.4 8.3L9.2 6.2" stroke="#8F959E" stroke-width="1.1"/></svg>
<div class="abs rd" style="left:343px;top:891px">Drive</div>
<svg class="abs" style="left:1176.5px;top:872.5px" width="25" height="25" viewBox="0 0 25 25"><defs><linearGradient id="oa3" x1="0.2" y1="0" x2="0.8" y2="1"><stop offset="0" stop-color="#8C55EE"/><stop offset="0.6" stop-color="#BF79E8"/><stop offset="1" stop-color="#E39DE2"/></linearGradient></defs><circle cx="12.5" cy="12.5" r="12.2" fill="url(#oa3)"/><text x="12.5" y="15.3" text-anchor="middle" font-family="Liberation Sans" font-size="8" fill="#fff">FZ</text></svg>
<div class="abs rg" style="left:1208px;top:877px">fiqih zulfikar</div>
<div class="abs rg" style="left:1479.5px;top:877px">6:23 AM Mar 27</div>
<svg class="abs" style="left:1818px;top:882px" width="24" height="8" viewBox="0 0 24 8"><circle cx="5" cy="3.6" r="1.5" fill="#3C4048"/><circle cx="11.9" cy="3.6" r="1.5" fill="#3C4048"/><circle cx="18.9" cy="3.6" r="1.5" fill="#3C4048"/></svg>
<div class="abs" style="left:254px;top:918px;width:1601px;height:2px;background:#E1E2E4"></div>
</body></html>
